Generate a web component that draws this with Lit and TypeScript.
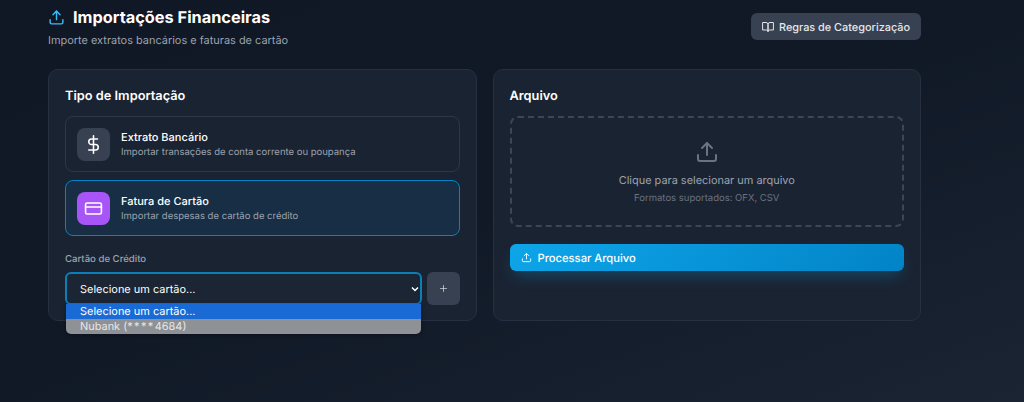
import { LitElement, html, css } from 'lit'
import { customElement } from 'lit/decorators.js'

const uploadIcon = html`<svg viewBox="0 0 24 24" fill="none" stroke="currentColor" stroke-width="2" stroke-linecap="round" stroke-linejoin="round"><path d="M21 15v4a2 2 0 0 1-2 2H5a2 2 0 0 1-2-2v-4"/><polyline points="17 8 12 3 7 8"/><line x1="12" y1="3" x2="12" y2="15"/></svg>`

/**
 * Financial imports page: import type on the left, file picker on the right.
 */
@customElement('app-root')
export class AppRoot extends LitElement {
  static styles = css`
    :host {
      display: block;
      min-height: 100vh;
      box-sizing: border-box;
      padding: 0 48px;
      background: linear-gradient(160deg, #101725 0%, #111927 50%, #1a2432 100%);
      font-family: Inter, 'Liberation Sans', sans-serif;
      text-rendering: geometricPrecision;
      color: #fff;
      overflow: hidden;
    }

    * {
      box-sizing: border-box;
    }

    .page {
      width: 873px;
      padding-top: 6px;
    }

    .header {
      display: flex;
      justify-content: space-between;
      align-items: flex-start;
      height: 63px;
    }

    .heading {
      display: flex;
      align-items: center;
      gap: 8px;
      height: 22px;
      font-size: 16.32px;
      font-weight: 700;
      margin: 0;
      color: #fff;
    }

    .heading svg {
      width: 17px;
      height: 17px;
      color: #38bdf8;
    }

    .subtitle {
      margin: 5px 0 0;
      font-size: 10.95px;
      line-height: 14px;
      color: #9ca3af;
    }

    .rules {
      display: flex;
      align-items: center;
      gap: 5px;
      height: 27px;
      width: 170px;
      margin-top: 7px;
      padding: 0 11px;
      border: none;
      border-radius: 6px;
      background: #374151;
      color: #e5e7eb;
      font: 500 10.88px Inter, sans-serif;
      text-rendering: geometricPrecision;
      white-space: nowrap;
    }

    .rules svg {
      width: 12px;
      height: 12px;
      flex: none;
    }

    .columns {
      display: grid;
      grid-template-columns: 1fr 1fr;
      gap: 16px;
    }

    .card {
      position: relative;
      height: 252px;
      padding: 16px;
      border: 1px solid #263041;
      border-radius: 10px;
      background: #1a2332;
    }

    .card h2 {
      margin: 0 0 12px;
      height: 18px;
      padding-top: 2px;
      font-size: 12.8px;
      line-height: 18px;
      font-weight: 600;
    }

    .options {
      display: flex;
      flex-direction: column;
      gap: 8px;
    }

    .option {
      display: flex;
      align-items: center;
      gap: 11px;
      height: 56px;
      padding: 0 11px;
      border: 1px solid #2d3748;
      border-radius: 8px;
    }

    .option.active {
      border-color: #0284c7;
      background: #172e44;
    }

    .option-icon {
      display: flex;
      align-items: center;
      justify-content: center;
      width: 33px;
      height: 33px;
      border-radius: 8px;
      background: #374151;
      color: #fff;
    }

    .option.active .option-icon {
      background: #a855f7;
    }

    .option-icon svg {
      width: 19px;
      height: 19px;
    }

    .option-text {
      padding-top: 2px;
    }

    .option-title {
      font-size: 11px;
      line-height: 15px;
      font-weight: 500;
    }

    .option-desc {
      font-size: 9.5px;
      line-height: 14px;
      margin-top: 1px;
      color: #9ca3af;
    }

    .field-label {
      display: block;
      margin-top: 17px;
      padding-top: 1px;
      font-size: 9.6px;
      line-height: 12px;
      font-weight: 500;
      color: #9ca3af;
    }

    .select-row {
      display: flex;
      gap: 5px;
      margin-top: 6px;
    }

    select {
      flex: 1;
      height: 33px;
      padding: 0 13px;
      border: 2px solid #0b7fb8;
      border-radius: 6px;
      outline: none;
      appearance: none;
      background: #1c2534 url("data:image/svg+xml,%3Csvg xmlns='http://www.w3.org/2000/svg' viewBox='0 0 8 6'%3E%3Cpath d='M1 1.5l3 3 3-3' fill='none' stroke='white' stroke-width='1.5'/%3E%3C/svg%3E") no-repeat right 1px center / 8px 6px;
      color: #fff;
      font: 400 10.95px Inter, sans-serif;
      text-rendering: geometricPrecision;
    }

    .add {
      width: 33px;
      height: 33px;
      border: none;
      border-radius: 6px;
      background: #374151;
      color: #d1d5db;
      display: flex;
      align-items: center;
      justify-content: center;
    }

    .add svg {
      width: 9px;
      height: 9px;
    }

    /* open native select list, lies over the card edge */
    .popup {
      position: absolute;
      left: 17px;
      top: 234px;
      width: 355px;
      border-radius: 0 0 5px 5px;
      overflow: hidden;
      font-size: 10.95px;
      line-height: 15px;
      color: #fff;
      box-shadow: 0 1px 4px rgba(0, 0, 0, 0.35);
    }

    .popup div {
      height: 15px;
      padding-left: 14px;
      background: #8e9196;
      color: #e6e7e8;
    }

    .popup div.selected {
      background: #1a6ad6;
      color: #fff;
    }

    .stars {
      letter-spacing: 1.4px;
    }

    .dropzone {
      display: flex;
      flex-direction: column;
      align-items: center;
      height: 111px;
      padding-top: 22px;
      border: 2px dashed #3c4656;
      border-radius: 8px;
    }

    .dropzone svg {
      width: 24px;
      height: 24px;
      color: #6b7280;
    }

    .drop-title {
      margin-top: 9px;
      font-size: 10.95px;
      line-height: 15px;
      color: #9ca3af;
    }

    .drop-hint {
      margin-top: 4px;
      font-size: 9.5px;
      line-height: 13px;
      color: #6b7280;
    }

    .process {
      display: flex;
      align-items: center;
      gap: 6px;
      width: 100%;
      height: 27px;
      margin-top: 17px;
      padding: 0 11px;
      border: none;
      border-radius: 6px;
      background: linear-gradient(135deg, #0ea5e9 0%, #0284c7 100%);
      box-shadow: 0 8px 16px -4px rgba(14, 165, 233, 0.3);
      color: #fff;
      font: 500 11.2px Inter, sans-serif;
      text-rendering: geometricPrecision;
    }

    .process svg {
      width: 11px;
      height: 11px;
    }
  `

  render() {
    return html`
      <div class="page">
        <header class="header">
          <div>
            <h1 class="heading">${uploadIcon}Importações Financeiras</h1>
            <p class="subtitle">Importe extratos bancários e faturas de cartão</p>
          </div>
          <button class="rules">
            <svg viewBox="0 0 24 24" fill="none" stroke="currentColor" stroke-width="2" stroke-linecap="round" stroke-linejoin="round"><path d="M2 3h6a4 4 0 0 1 4 4v14a3 3 0 0 0-3-3H2z"/><path d="M22 3h-6a4 4 0 0 0-4 4v14a3 3 0 0 1 3-3h7z"/></svg>
            Regras de Categorização
          </button>
        </header>
        <div class="columns">
          <section class="card">
            <h2>Tipo de Importação</h2>
            <div class="options">
              <div class="option">
                <div class="option-icon">
                  <svg viewBox="0 0 24 24" fill="none" stroke="currentColor" stroke-width="2" stroke-linecap="round" stroke-linejoin="round"><line x1="12" y1="1" x2="12" y2="23"/><path d="M17 5H9.5a3.5 3.5 0 0 0 0 7h5a3.5 3.5 0 0 1 0 7H6"/></svg>
                </div>
                <div class="option-text">
                  <div class="option-title">Extrato Bancário</div>
                  <div class="option-desc">Importar transações de conta corrente ou poupança</div>
                </div>
              </div>
              <div class="option active">
                <div class="option-icon">
                  <svg viewBox="0 0 24 24" fill="none" stroke="currentColor" stroke-width="2" stroke-linecap="round" stroke-linejoin="round"><rect x="2" y="5" width="20" height="14" rx="2"/><line x1="2" y1="10" x2="22" y2="10"/></svg>
                </div>
                <div class="option-text">
                  <div class="option-title">Fatura de Cartão</div>
                  <div class="option-desc">Importar despesas de cartão de crédito</div>
                </div>
              </div>
            </div>
            <label class="field-label">Cartão de Crédito</label>
            <div class="select-row">
              <select>
                <option>Selecione um cartão...</option>
                <option>Nubank (****4684)</option>
              </select>
              <button class="add">
                <svg viewBox="0 0 24 24" fill="none" stroke="currentColor" stroke-width="2" stroke-linecap="round"><line x1="12" y1="4" x2="12" y2="20"/><line x1="4" y1="12" x2="20" y2="12"/></svg>
              </button>
            </div>
            <div class="popup">
              <div class="selected">Selecione um cartão...</div>
              <div>Nubank (<span class="stars">****</span>4684)</div>
            </div>
          </section>
          <section class="card">
            <h2>Arquivo</h2>
            <div class="dropzone">
              ${uploadIcon}
              <div class="drop-title">Clique para selecionar um arquivo</div>
              <div class="drop-hint">Formatos suportados: OFX, CSV</div>
            </div>
            <button class="process">${uploadIcon}Processar Arquivo</button>
          </section>
        </div>
      </div>
    `
  }
}
